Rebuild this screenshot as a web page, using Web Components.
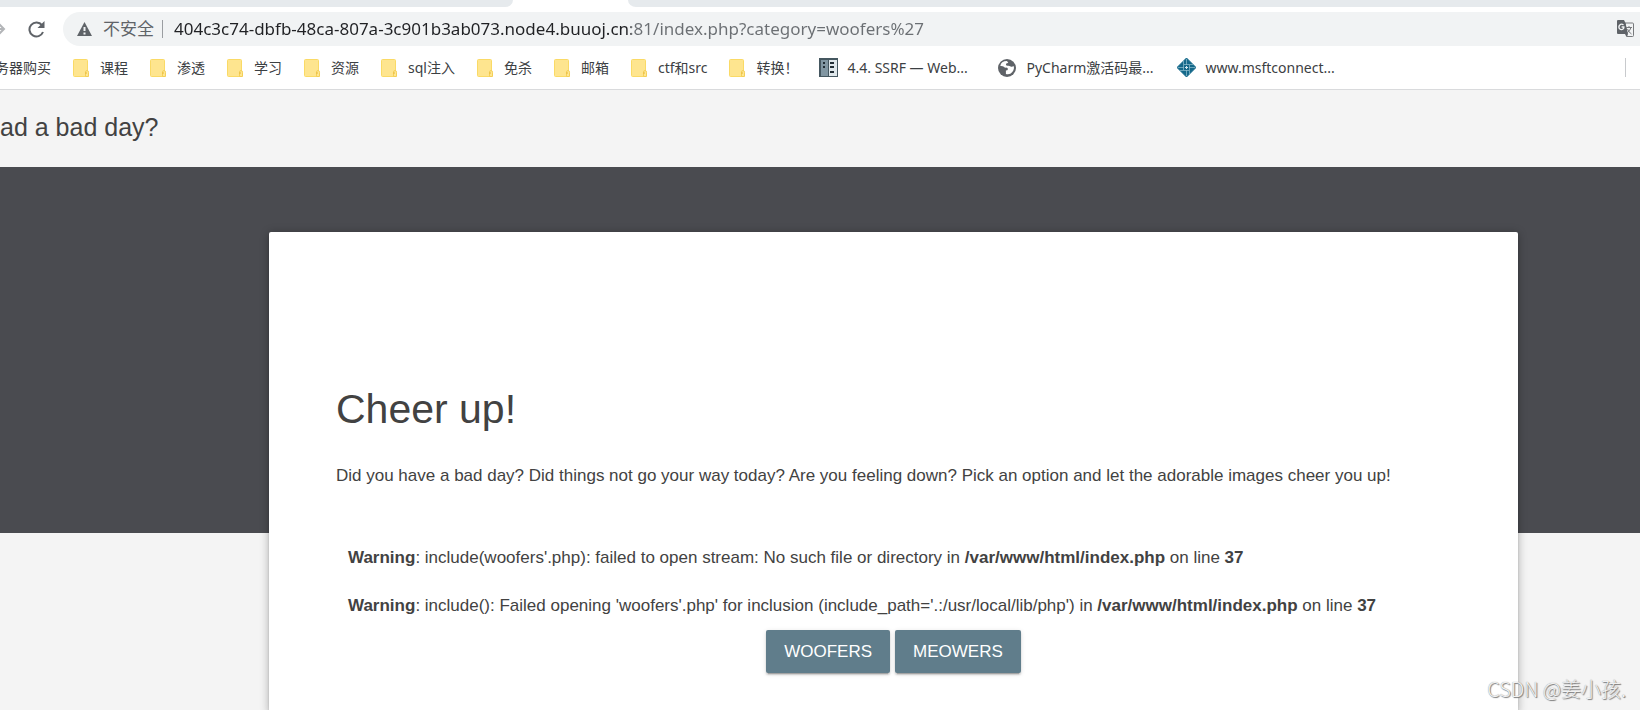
<!DOCTYPE html>
<html lang="zh-CN">
<head>
<meta charset="utf-8">
<title>Had a bad day?</title>
<style>
    body {
        margin: 0;
        height: 100vh;
        overflow: hidden;
        display: flex;
        flex-direction: column;
        background: #f4f4f4;
        color: #424242;
        font-family: "Liberation Sans", Arial, sans-serif;
    }
</style>
</head>
<body>
<browser-bar url="404c3c74-dbfb-48ca-807a-3c901b3ab073.node4.buuoj.cn:81/index.php?category=woofers%27">
    <bookmark-link icon="none">务器购买</bookmark-link>
    <bookmark-link>课程</bookmark-link>
    <bookmark-link>渗透</bookmark-link>
    <bookmark-link>学习</bookmark-link>
    <bookmark-link>资源</bookmark-link>
    <bookmark-link>sql注入</bookmark-link>
    <bookmark-link>免杀</bookmark-link>
    <bookmark-link>邮箱</bookmark-link>
    <bookmark-link>ctf和src</bookmark-link>
    <bookmark-link>转换！</bookmark-link>
    <bookmark-link icon="book">4.4. SSRF — Web...</bookmark-link>
    <bookmark-link icon="globe">PyCharm激活码最...</bookmark-link>
    <bookmark-link icon="weave">www.msftconnect...</bookmark-link>
</browser-bar>
<cheer-page heading="ad a bad day?">
    <cheer-card heading="Cheer up!">
        <span slot="intro">Did you have a bad day? Did things not go your way today? Are you feeling down? Pick an option and let the adorable images cheer you up!</span>
        <php-warning file="/var/www/html/index.php" line="37">include(woofers'.php): failed to open stream: No such file or directory</php-warning>
        <php-warning file="/var/www/html/index.php" line="37">include(): Failed opening 'woofers'.php' for inclusion (include_path='.:/usr/local/lib/php')</php-warning>
        <raised-button slot="actions">WOOFERS</raised-button>
        <raised-button slot="actions">MEOWERS</raised-button>
    </cheer-card>
</cheer-page>
<water-mark>CSDN @姜小孩.</water-mark>

<script>
/**
 * Icons used by the bookmark links.
 */
const BOOKMARK_ICONS = {
    none: '',
    folder: `<svg viewBox="0 0 18 18" width="18" height="18">
        <rect x="1.5" y=".5" width="14" height="17" rx="1" fill="#fee58f" stroke="#fada66"/>
        <path d="M13.5 17.5v-4.200q0-1.800 1.500-1.800t1.500 1.800v4.200z" fill="#ffe791" stroke="#f4cf58"/>
        <path d="M14 15v-2" stroke="#e8b838"/>
    </svg>`,
    book: `<svg viewBox="0 0 19 19" width="19" height="19">
        <path d="M0 0h19v19H0z" fill="#455760"/>
        <path d="M2 2h7v16H2z" fill="#8196a2"/>
        <path d="M10 2h8v16h-8z" fill="#dfe7eb"/>
        <path d="M4 4h2v2H4zm0 4h2v2H4zM11 4h4v2h-4zm0 4h4v2h-4zm0 5h4v2h-4z" fill="#222e36"/>
    </svg>`,
    globe: `<svg viewBox="0 0 18 18" width="18" height="18">
        <circle cx="9" cy="9" r="9" fill="#5f6368"/>
        <path d="M9 2Q3 2 2.300 7q2.500-.2 3.500.8t2.300.8q2 0 1.800 1.600-.2 1.300-2 1.300v3.500q4 1.200 6.400-2 2.500-3.300 1.300-6-1.500 1.200-3 .4-1.300-.9-3.200-.6-2-.1-1.400-1.800.5-1.100 2.300-1z" fill="#fff"/>
    </svg>`,
    weave: `<svg viewBox="0 0 19 19" width="19" height="19">
        <path d="M9.500 0l9.500 9.500-9.500 9.500L0 9.500z" fill="#14688a" stroke="#14688a"/>
        <path d="M6.500 3v9M12.500 7v9M3 12.500h9M7 6.500h9M9.500 1v6M9.500 12v6M1 9.500h6M12 9.500h6" fill="none" stroke="#91c0d0" stroke-opacity=".7"/>
        <path d="M8 9.500h3M9.500 8v3" stroke="#d0e5ed"/>
    </svg>`
};

/**
 * Tab strip, address bar and bookmarks.
 */
class BrowserBar extends HTMLElement {
    constructor() {
        super();
        this.attachShadow({ mode: 'open' });
    }

    connectedCallback() {
        this.shadowRoot.innerHTML = `
            <style>
                :host {
                    display: block;
                    flex: none;
                    background: white;
                    border-bottom: 1px solid #d9dadc;
                    font-family: "Noto Sans", "Noto Sans CJK SC", sans-serif;
                }
                .tabs { display: flex; height: 7px; }
                .tab { background: #e6eaed; }
                .before { width: 513px; border-bottom-right-radius: 8px 7px; }
                .active { width: 115px; }
                .after { flex: 1; border-bottom-left-radius: 8px 7px; }
                .toolbar { display: flex; align-items: center; height: 44px; }
                .toolbar button {
                    display: flex;
                    padding: 0;
                    border: 0;
                    background: none;
                    color: #5f6368;
                }
                .reload { margin: 0 18px 0 22px; }
                .omnibox {
                    flex: 1;
                    display: flex;
                    align-items: center;
                    height: 34px;
                    padding: 0 6px 0 14px;
                    border-radius: 17px 0 0 17px;
                    background: #f1f3f4;
                }
                .security {
                    margin-left: 11px;
                    padding-right: 8px;
                    border-right: 1px solid #9a9da1;
                    font-size: 17px;
                    line-height: 18px;
                    color: #5f6368;
                }
                input {
                    flex: 1;
                    box-sizing: border-box;
                    min-width: 0;
                    height: 32px;
                    margin-left: 11px;
                    padding: 0 0 2px;
                    border: 0;
                    outline: 0;
                    font: 17px "Noto Sans", sans-serif;
                    color: #202124;
                    /* host name dark, the rest of the address grey */
                    background: linear-gradient(90deg, #202124 457px, #6b6f73 457px);
                    -webkit-background-clip: text;
                    -webkit-text-fill-color: transparent;
                }
                nav {
                    display: flex;
                    align-items: center;
                    gap: 21px;
                    height: 33px;
                    padding: 0 14px 5px 0;
                    margin-left: -5px;
                }
                .divider { width: 1px; height: 19px; margin-left: auto; background: #c8cacd; }
            </style>
            <div class="tabs">
                <div class="tab before"></div><div class="active"></div><div class="tab after"></div>
            </div>
            <div class="toolbar">
                <button aria-label="Forward">
                    <svg width="6" height="14" viewBox="0 0 6 14"><path d="M-8 7H4M-2 1l6 6-6 6" fill="none" stroke="#b3b5b8" stroke-width="2"/></svg>
                </button>
                <button class="reload" aria-label="Reload">
                    <svg width="17" height="17" viewBox="0 0 17 17">
                        <path d="M14 4.200A7 7 0 1 0 15 11" fill="none" stroke="currentColor" stroke-width="2"/>
                        <path d="M16.500 0v7h-7z" fill="currentColor"/>
                    </svg>
                </button>
                <div class="omnibox">
                    <svg width="15" height="14" viewBox="0 0 15 14">
                        <path d="M7.500 0L15 14H0z" fill="#5f6368"/>
                        <path d="M7.500 5v4M7.500 10.500v2" stroke="#f1f3f4" stroke-width="2"/>
                    </svg>
                    <label class="security" for="url">不安全</label>
                    <input id="url" type="text" spellcheck="false">
                    <button aria-label="Translate">
                        <svg width="17" height="18" viewBox="0 0 17 18">
                            <path d="M8 3h7.500q1 0 1 1v11.500q0 1-1 1H10z" fill="#f1f3f4" stroke="#77797c"/>
                            <path d="M1 0h6l1.500 3L11 14H1q-1 0-1-1V1q0-1 1-1zM8 14h3l-1.500 3z" fill="#5f6368"/>
                            <path d="M6.500 5Q4.500 3.300 2.800 5t-.3 3.800q2 1.700 3.800 0 .7-.8.600-1.800H4.600" fill="none" stroke="#f1f3f4" stroke-width="1.300"/>
                            <path d="M9 7.500h6M12 6v1.500M14 7.500q-1 3.500-4 5.500M10.500 9q1 3 4 5" fill="none" stroke="#77797c"/>
                        </svg>
                    </button>
                </div>
            </div>
            <nav><slot></slot><div class="divider"></div></nav>
        `;
        this.shadowRoot.querySelector('input').value = this.getAttribute('url');
    }
}

/**
 * Single bookmark with its icon.
 */
class BookmarkLink extends HTMLElement {
    constructor() {
        super();
        this.attachShadow({ mode: 'open' });
    }

    connectedCallback() {
        const icon = this.getAttribute('icon') || 'folder';
        this.shadowRoot.innerHTML = `
            <style>
                :host { display: block; flex: none; }
                /* page bookmarks share one width, folders fit their name */
                :host([icon]:not([icon="none"])) { width: 158px; }
                a {
                    display: flex;
                    align-items: center;
                    gap: 10px;
                    color: #3c4043;
                    font-size: 14px;
                    line-height: 20px;
                    text-decoration: none;
                    white-space: nowrap;
                }
                i { display: flex; width: 18px; }
                i:empty { display: none; }
                svg { flex: none; }
            </style>
            <a href="#"><i>${BOOKMARK_ICONS[icon]}</i><slot></slot></a>
        `;
    }
}

/**
 * Page shell: header, dark ribbon and the content over it.
 */
class CheerPage extends HTMLElement {
    constructor() {
        super();
        this.attachShadow({ mode: 'open' });
    }

    connectedCallback() {
        this.shadowRoot.innerHTML = `
            <style>
                :host { display: block; flex: 1; min-height: 0; }
                header {
                    box-sizing: border-box;
                    height: 77px;
                    padding-top: 23px;
                    font-size: 25px;
                    line-height: 28px;
                }
                .ribbon { height: 366px; background: #4a4b50; }
                main { margin: -301px 122px 0 269px; }
            </style>
            <header>${this.getAttribute('heading')}</header>
            <div class="ribbon"></div>
            <main><slot></slot></main>
        `;
    }
}

/**
 * White card with heading, intro, messages and actions.
 */
class CheerCard extends HTMLElement {
    constructor() {
        super();
        this.attachShadow({ mode: 'open' });
    }

    connectedCallback() {
        this.shadowRoot.innerHTML = `
            <style>
                :host {
                    display: block;
                    padding: 153px 67px 40px;
                    border-radius: 2px;
                    background: white;
                    box-shadow: 0 2px 2px rgba(0,0,0,.14), 0 3px 1px -2px rgba(0,0,0,.2), 0 1px 10px rgba(0,0,0,.3);
                    font-size: 17px;
                    line-height: 24px;
                }
                h1 { margin: 0 0 31px; font-size: 41px; line-height: 48px; font-weight: 400; }
                p { margin: 0 0 58px; }
                .messages { display: grid; gap: 24px; padding: 0 12px; }
                .actions { display: flex; justify-content: center; gap: 5px; margin-top: 12px; }
            </style>
            <h1>${this.getAttribute('heading')}</h1>
            <p><slot name="intro"></slot></p>
            <div class="messages"><slot></slot></div>
            <div class="actions"><slot name="actions"></slot></div>
        `;
    }
}

/**
 * PHP warning line.
 */
class PhpWarning extends HTMLElement {
    constructor() {
        super();
        this.attachShadow({ mode: 'open' });
    }

    connectedCallback() {
        this.shadowRoot.innerHTML = `
            <style>:host { display: block; }</style>
            <b>Warning</b>: <slot></slot> in <b>${this.getAttribute('file')}</b> on line <b>${this.getAttribute('line')}</b>
        `;
    }
}

/**
 * Raised material button.
 */
class RaisedButton extends HTMLElement {
    constructor() {
        super();
        this.attachShadow({ mode: 'open' });
    }

    connectedCallback() {
        this.shadowRoot.innerHTML = `
            <style>
                :host { display: block; }
                button {
                    display: block;
                    height: 43px;
                    padding: 0 18px;
                    border: 0;
                    border-radius: 2px;
                    background: #607d8b;
                    color: white;
                    font: inherit;
                    box-shadow: 0 2px 2px rgba(0,0,0,.14), 0 3px 1px -2px rgba(0,0,0,.2), 0 1px 5px rgba(0,0,0,.12);
                    cursor: pointer;
                }
            </style>
            <button><slot></slot></button>
        `;
    }
}

/**
 * Corner watermark.
 */
class WaterMark extends HTMLElement {
    constructor() {
        super();
        this.attachShadow({ mode: 'open' });
    }

    connectedCallback() {
        this.shadowRoot.innerHTML = `
            <style>
                :host {
                    position: absolute;
                    right: 14px;
                    bottom: 7px;
                    color: #f2f2f2;
                    font: 300 20px/28px "Noto Sans CJK SC", sans-serif;
                    text-shadow: 1px 1px 1px #777, 0 0 1px #888;
                }
            </style>
            <slot></slot>
        `;
    }
}

customElements.define('browser-bar', BrowserBar);
customElements.define('bookmark-link', BookmarkLink);
customElements.define('cheer-page', CheerPage);
customElements.define('cheer-card', CheerCard);
customElements.define('php-warning', PhpWarning);
customElements.define('raised-button', RaisedButton);
customElements.define('water-mark', WaterMark);
</script>
</body>
</html>
